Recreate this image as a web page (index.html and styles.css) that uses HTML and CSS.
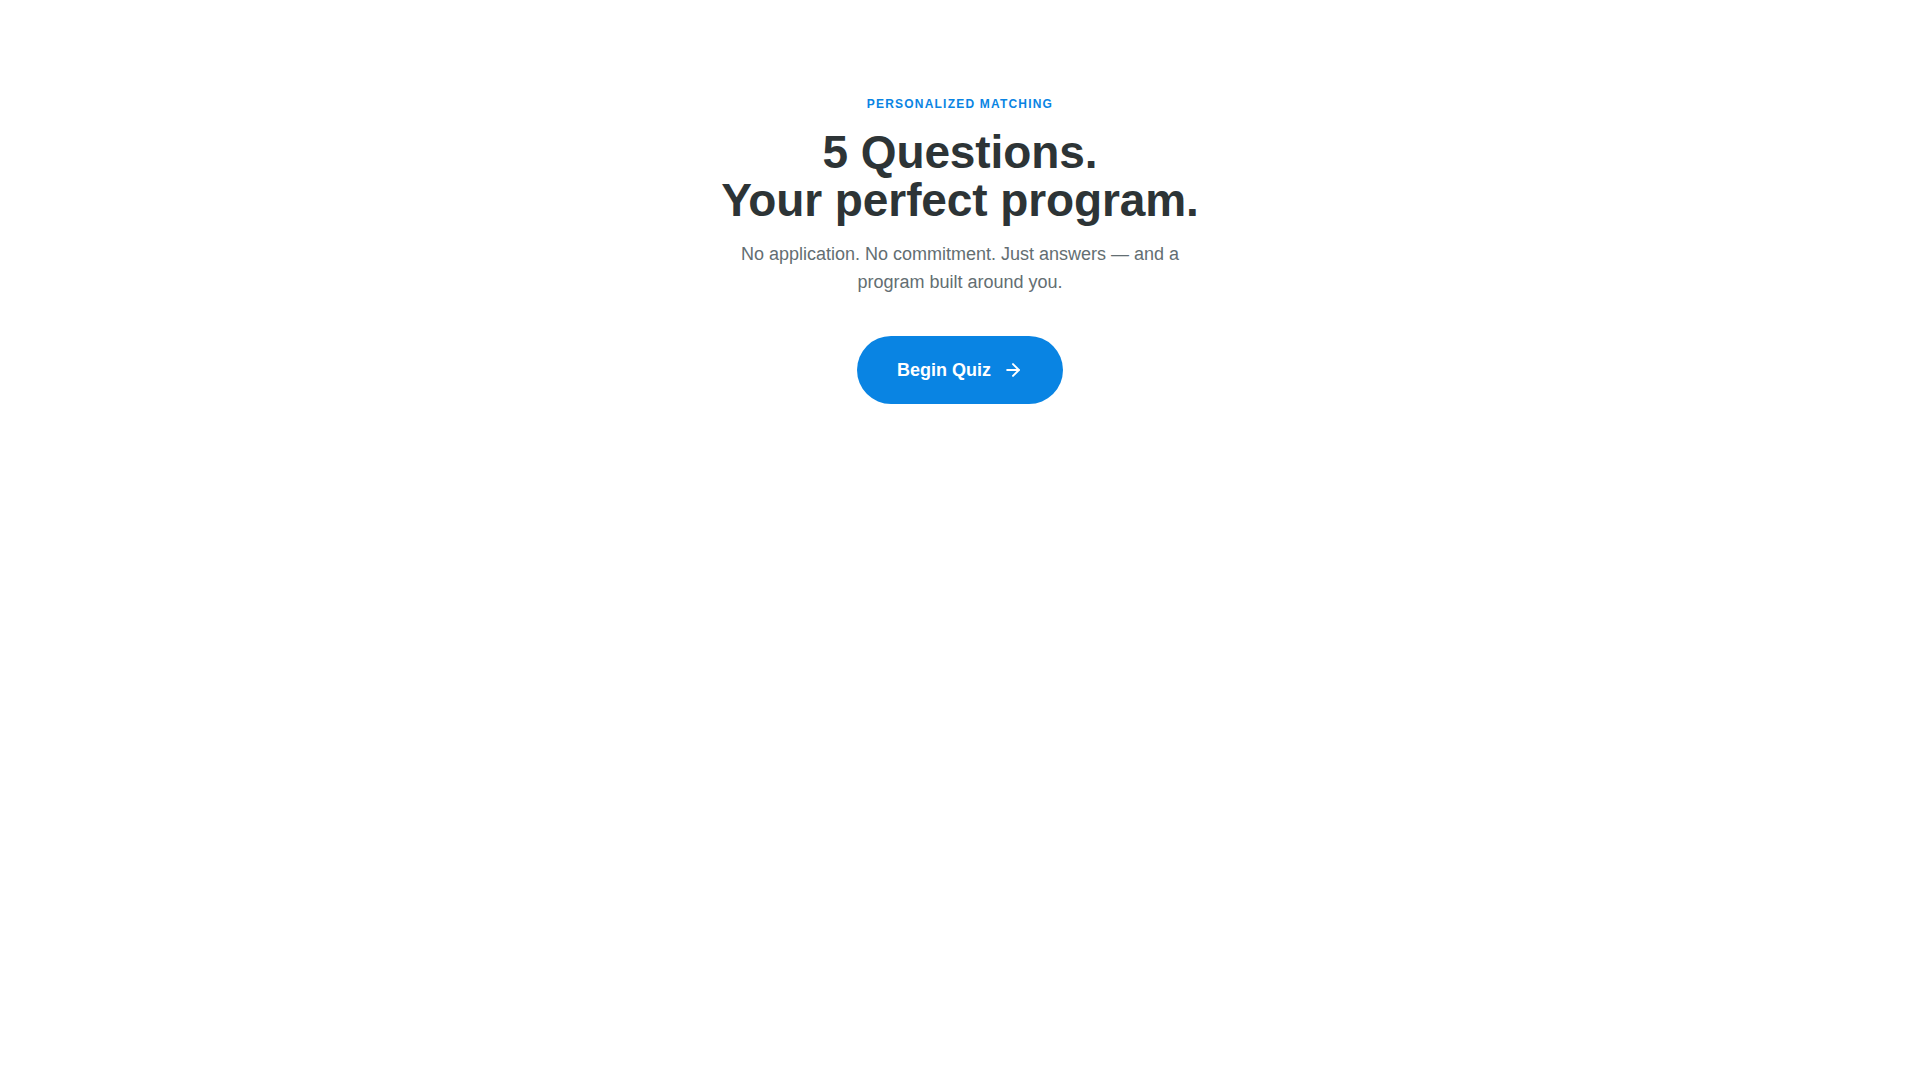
FILE: index.html
```html
<!DOCTYPE html>
<html lang="en">
<head>
<meta charset="utf-8">
<title>Quiz</title>
<link rel="stylesheet" href="styles.css">
</head>
<body>
<main class="intro">
  <div class="eyebrow">PERSONALIZED MATCHING</div>
  <h1 class="title">5 Questions.<br>Your perfect program.</h1>
  <p class="lead">No application. No commitment. Just answers — and a program built around you.</p>
  <button class="cta" type="button">
    <span>Begin Quiz</span>
    <svg class="cta-icon" viewBox="0 0 24 24" width="20" height="20" fill="none" stroke="currentColor" stroke-width="2.4" stroke-linecap="round" stroke-linejoin="round"><path d="M5 12h14"/><path d="m12 5 7 7-7 7"/></svg>
  </button>
</main>
</body>
</html>
```

FILE: styles.css
```css
* { box-sizing: border-box; }
html, body { margin: 0; padding: 0; background: #ffffff; }
body { font-family: "Liberation Sans", Arial, sans-serif; }
.intro {
  display: flex;
  flex-direction: column;
  align-items: center;
  text-align: center;
  padding-top: 96px;
}
.eyebrow {
  font-size: 12px;
  line-height: 16px;
  font-weight: 700;
  letter-spacing: 1.2px;
  color: #0984e3;
  margin: 0 0 16px;
}
.title {
  margin: 0 0 16px;
  font-size: 46px;
  line-height: 48px;
  font-weight: 700;
  letter-spacing: -0.1px;
  color: #2d3436;
}
.lead {
  margin: 0 0 40px;
  max-width: 480px;
  font-size: 18px;
  line-height: 28px;
  color: #636e72;
}
.cta {
  display: inline-flex;
  align-items: center;
  gap: 12px;
  padding: 22px 40px;
  border: 0;
  border-radius: 999px;
  background: #0984e3;
  color: #ffffff;
  font-family: inherit;
  font-size: 18px;
  line-height: 24px;
  font-weight: 700;
  cursor: pointer;
}
.cta-icon { display: block; }
```
